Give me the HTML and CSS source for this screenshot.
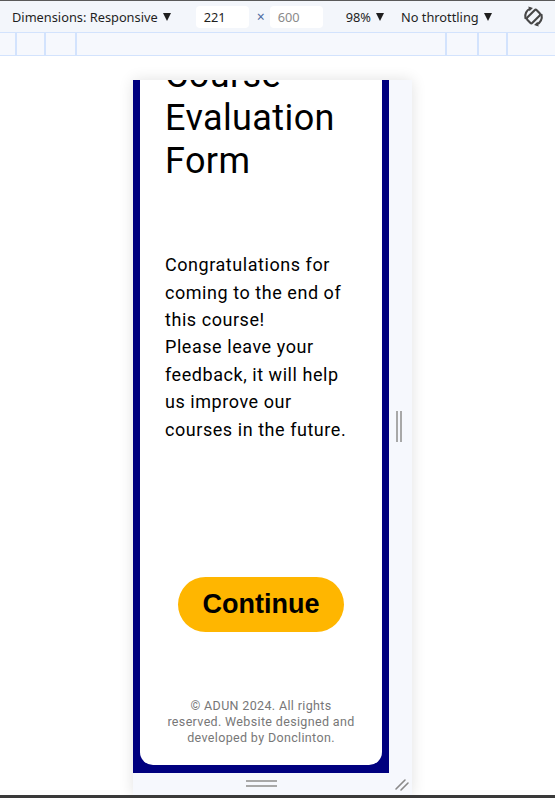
FILE: index.html
```html
<!DOCTYPE html>
<html lang="en">
<head>
<meta charset="utf-8">
<title>Course Evaluation Form</title>
<link rel="stylesheet" href="styles.css">
</head>
<body>
<div class="toolbar">
  <span class="tb-item tb-dim">Dimensions: Responsive<span class="caret"></span></span>
  <span class="tb-input">221</span>
  <span class="tb-x">×</span>
  <span class="tb-input tb-muted">600</span>
  <span class="tb-item tb-zoom">98%<span class="caret"></span></span>
  <span class="tb-item tb-thr">No throttling<span class="caret"></span></span>
  <svg class="tb-rotate" viewBox="0 0 24 24" width="23" height="23" aria-hidden="true">
    <g fill="none" stroke="#474747" stroke-width="2.2" stroke-linecap="round">
      <rect x="8.2" y="5" width="7.6" height="14" rx="1.6" transform="rotate(45 12 12)"/>
      <path d="M3.6 13.8 A8.6 8.6 0 0 1 8.6 3.8"/>
      <path d="M20.4 10.2 A8.6 8.6 0 0 1 15.4 20.2"/>
    </g>
    <path d="M6.6 1.6 L11.4 3.2 L7.8 6.6 Z" fill="#474747"/>
    <path d="M17.4 22.4 L12.6 20.8 L16.2 17.4 Z" fill="#474747"/>
  </svg>
</div>
<div class="ruler">
  <span class="rs rs1"></span><span class="rs rs2"></span><span class="rs rs3"></span>
  <span class="ruler-fill"></span>
  <span class="rs rs4"></span><span class="rs rs5"></span><span class="rs rs6"></span>
</div>
<div class="stage">
  <div class="device">
    <div class="viewport">
      <div class="card">
        <h1 class="title">Course Evaluation Form</h1>
        <p class="intro">Congratulations for coming to the end of this course!<br>Please leave your feedback, it will help us improve our courses in the future.</p>
        <button class="cta" type="button">Continue</button>
        <footer class="foot">© ADUN 2024. All rights reserved. Website designed and developed by Donclinton.</footer>
      </div>
    </div>
    <div class="handle-right"><span class="bar-v"></span><span class="bar-v"></span></div>
    <div class="handle-bottom"><span class="bar-h"></span><span class="bar-h"></span></div>
    <div class="handle-corner">
      <svg viewBox="0 0 16 16" width="16" height="16" aria-hidden="true">
        <g stroke="#8a8a8a" stroke-width="1.6" stroke-linecap="round">
          <line x1="2" y1="13" x2="11" y2="4"/>
          <line x1="7" y1="14" x2="14" y2="7"/>
        </g>
      </svg>
    </div>
  </div>
</div>
<div class="bottom-edge"></div>
</body>
</html>
```
FILE: styles.css
```css
html, body {
  margin: 0;
  padding: 0;
}
body {
  width: 555px;
  height: 798px;
  overflow: hidden;
  background: #ffffff;
  display: flex;
  flex-direction: column;
  font-family: "Noto Sans", "Open Sans", sans-serif;
}
.toolbar {
  height: 31px;
  border-top: 1px solid #5a5a5a;
  background: #f3f6fb;
  display: flex;
  align-items: center;
  font-size: 12.8px;
  color: #1f1f1f;
  flex: none;
}
.tb-item {
  white-space: nowrap;
  display: flex;
  align-items: center;
}
.caret {
  display: inline-block;
  margin-left: 5px;
  width: 0;
  height: 0;
  border-left: 4.5px solid transparent;
  border-right: 4.5px solid transparent;
  border-top: 8px solid #1f1f1f;
}
.tb-dim { margin-left: 12px; }
.tb-input {
  margin-left: 25px;
  width: 53px;
  height: 22px;
  box-sizing: border-box;
  padding-left: 8px;
  background: #ffffff;
  border-radius: 4px;
  display: flex;
  align-items: center;
  color: #1f1f1f;
}
.tb-muted {
  margin-left: 5px;
  color: #8a8a8a;
}
.tb-x {
  margin-left: 8px;
  color: #4d6aa0;
  font-size: 14px;
}
.tb-zoom { margin-left: 23px; }
.tb-thr { margin-left: 17px; }
.tb-rotate { margin-left: 30px; }

.ruler {
  height: 22px;
  border-top: 1px solid #d3e3fd;
  border-bottom: 1px solid #d3e3fd;
  background: #f6f8fd;
  display: flex;
  flex: none;
}
.rs {
  width: 2px;
  background: #d3e3fd;
  flex: none;
}
.rs1 { margin-left: 15px; }
.rs2 { margin-left: 27px; }
.rs3 { margin-left: 29px; }
.ruler-fill { flex: 1; }
.rs4 { margin-right: 30px; }
.rs5 { margin-right: 27px; }
.rs6 { margin-right: 47px; }

.stage {
  flex: 1;
  padding: 24px 0 0 133px;
  overflow: hidden;
}
.device {
  display: grid;
  grid-template-columns: 256px 23px;
  grid-template-rows: 693px 22px;
  width: 279px;
  background: #f6f8fd;
  box-shadow: 0 0 14px rgba(0, 0, 0, 0.12);
}
.viewport {
  background: #00007f;
  overflow: hidden;
  padding: 0 7px 8px;
  box-sizing: border-box;
  display: flex;
  flex-direction: column;
  justify-content: flex-end;
}
.card {
  background: #ffffff;
  border-radius: 0 0 13px 13px;
  padding: 0 25px 19px;
  display: flex;
  flex-direction: column;
  font-family: Roboto, "Noto Sans", sans-serif;
  color: #000000;
}
.title {
  margin: 0;
  font-size: 36px;
  font-weight: 400;
  line-height: 43px;
  letter-spacing: 0.4px;
}
.intro {
  margin: 68px 0 0;
  font-size: 18px;
  line-height: 27.4px;
  letter-spacing: 0.55px;
}
.cta {
  margin: 134px auto 0;
  height: 55px;
  padding: 0 25px;
  border: none;
  border-radius: 28px;
  background: #ffb600;
  color: #000000;
  font-family: "Liberation Sans", Arial, sans-serif;
  font-weight: 700;
  font-size: 27px;
}
.foot {
  margin-top: 66px;
  font-size: 12.5px;
  line-height: 16px;
  letter-spacing: 0.35px;
  text-align: center;
  color: #777777;
}
.handle-right {
  display: flex;
  justify-content: center;
  align-items: center;
  gap: 2px;
  padding-right: 3px;
}
.bar-v {
  width: 2px;
  height: 31px;
  background: #a8a8a8;
}
.handle-bottom {
  display: flex;
  flex-direction: column;
  align-items: center;
  justify-content: center;
  gap: 3px;
  padding-bottom: 2px;
}
.bar-h {
  width: 31px;
  height: 2px;
  background: #a8a8a8;
}
.handle-corner {
  display: flex;
  align-items: center;
  justify-content: center;
  padding-left: 2px;
}
.bottom-edge {
  height: 3px;
  background: #3a3a3a;
  flex: none;
}
```
